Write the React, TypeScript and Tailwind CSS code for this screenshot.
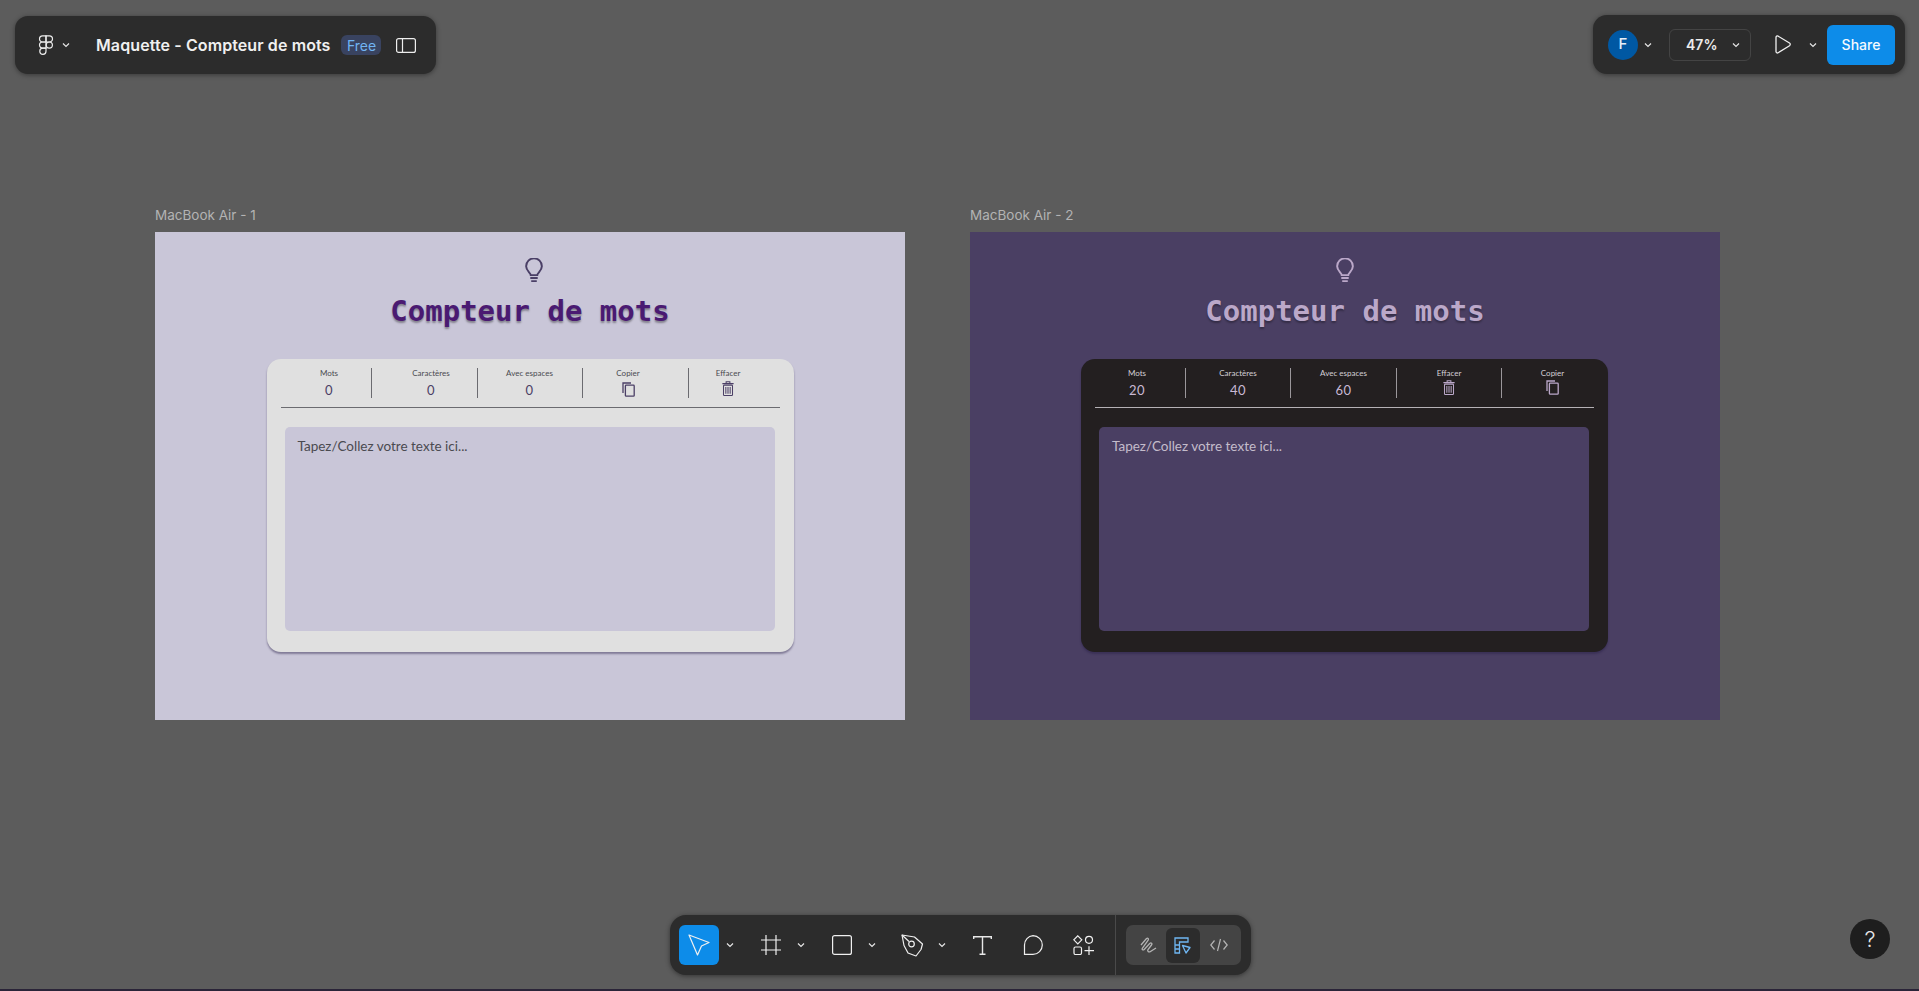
import { type ReactNode } from 'react';

const ui = 'font-["Inter",sans-serif]';

function Chevron({ className = 'text-[#e6e6e6]' }: { className?: string }) {
  return (
    <svg width="8" height="6" viewBox="0 0 8 6" fill="none" className={className}>
      <path d="M1 1.5 4 4.5 7 1.5" stroke="currentColor" strokeWidth="1.2" />
    </svg>
  );
}

function FigmaLogo() {
  return (
    <svg width="16" height="21" viewBox="0 0 16 21" fill="none" stroke="#ececec" strokeWidth="1.2">
      <path d="M8 .8H4.6a3.1 3.1 0 0 0 0 6.2H8z" />
      <path d="M8 .8h3.4a3.1 3.1 0 0 1 0 6.2H8z" />
      <path d="M8 7H4.6a3.1 3.1 0 0 0 0 6.2H8z" />
      <circle cx="11.3" cy="10.1" r="3.1" />
      <path d="M8 13.2H4.6a3.1 3.1 0 1 0 3.4 3.1z" />
    </svg>
  );
}

function Bulb({ className }: { className: string }) {
  return (
    <svg width="18" height="25" viewBox="0 0 19 27" fill="none" className={className} stroke="currentColor" strokeWidth="2.1">
      <path d="M6 18.5c0-2.4-5-4.6-5-9.6a8.5 8.5 0 0 1 17 0c0 5-5 7.2-5 9.6z" />
      <path d="M5.5 21.5h8M6.5 25h6" />
    </svg>
  );
}

function CopyIcon({ className }: { className: string }) {
  return (
    <svg width="13" height="15" viewBox="0 0 13 15" fill="none" className={className} stroke="currentColor" strokeWidth="1.3">
      <path d="M1 11V1h8" />
      <rect x="3.4" y="3.2" width="8.8" height="11" rx=".8" />
    </svg>
  );
}

function TrashIcon({ className }: { className: string }) {
  return (
    <svg width="12" height="15" viewBox="0 0 12 16" fill="none" className={className} stroke="currentColor" strokeWidth="1.1">
      <path d="M0 2.8h12M4 2.6V.8h4v1.8" />
      <rect x="1.2" y="4.4" width="9.6" height="11" rx=".8" />
      <path d="M3.7 6.5v7M6 6.5v7M8.3 6.5v7" />
    </svg>
  );
}

interface Stat {
  label: string;
  value?: string;
  icon?: 'copy' | 'trash';
  col: string;
}

const lightStats: Stat[] = [
  { label: 'Mots', value: '0', col: 'w-[91px] pl-[7px]' },
  { label: 'Caractères', value: '0', col: 'w-[106px] pl-[14px]' },
  { label: 'Avec espaces', value: '0', col: 'w-[105px]' },
  { label: 'Copier', icon: 'copy', col: 'w-[106px] pr-[14px]' },
  { label: 'Effacer', icon: 'trash', col: 'w-[90px] pr-[11px]' },
];

const darkStats: Stat[] = [
  { label: 'Mots', value: '20', col: 'w-[91px] pr-[6px]' },
  { label: 'Caractères', value: '40', col: 'w-[105px]' },
  { label: 'Avec espaces', value: '60', col: 'w-[106px]' },
  { label: 'Effacer', icon: 'trash', col: 'w-[105px]' },
  { label: 'Copier', icon: 'copy', col: 'w-[91px] pl-[10px]' },
];

function StatColumn({ stat, dark, last }: { stat: Stat; dark: boolean; last: boolean }) {
  const iconColor = dark ? 'text-[#bba8c9]' : 'text-[#4b3f66]';
  return (
    <div
      className={`flex h-[30px] flex-col items-center ${stat.col} ${
        last ? '' : dark ? 'border-r border-[#9b979b]' : 'border-r border-[#6b6b70]'
      }`}
    >
      <span className={`text-[8px] leading-[11px] ${dark ? 'text-[#d4d0d6]' : 'text-[#4a4a50]'}`}>{stat.label}</span>
      {stat.value ? (
        <span className={`mt-[4px] text-[13px] leading-[15px] tracking-[0.5px] ${dark ? 'text-[#c9b9d4]' : 'text-[#4b3f66]'}`}>
          {stat.value}
        </span>
      ) : stat.icon === 'copy' ? (
        <CopyIcon className={`${iconColor} ${dark ? 'mt-[1px]' : 'mt-[3px]'}`} />
      ) : (
        <TrashIcon className={`${iconColor} ${dark ? 'mt-[1px]' : 'mt-[2px]'}`} />
      )}
    </div>
  );
}

function Frame({ name, dark, left, stats }: { name: string; dark: boolean; left: string; stats: Stat[] }) {
  return (
    <div className={`absolute top-[205px] w-[750px] ${left}`}>
      <div className={`${ui} h-[27px] pt-[1px] text-[13.5px] leading-[18px] text-[#b3b3b3]`}>{name}</div>
      <div className={`flex h-[488px] flex-col items-center pt-[26px] font-["Lato",sans-serif] ${dark ? 'bg-[#4a3f63]' : 'bg-[#c9c6d8]'}`}>
        <Bulb className={dark ? 'text-[#bba8c9]' : 'ml-[7px] text-[#4a3f66]'} />
        <h1
          className={`mt-[10px] h-[37px] font-["DejaVu_Sans_Mono",monospace] text-[29px] font-bold leading-[37px] ${
            dark
              ? 'text-[#bba8c9] [text-shadow:0_2px_2px_rgba(0,0,0,0.3)]'
              : 'text-[#4a1a72] [text-shadow:0_2px_2px_rgba(0,0,0,0.35)]'
          }`}
        >
          Compteur de mots
        </h1>
        <section
          className={`mt-[29px] h-[293px] w-[527px] rounded-[14px] px-[14px] pt-[9px] shadow-[0_2px_2px_rgba(40,30,70,0.45)] ${
            dark ? '-ml-[1px] bg-[#231f20]' : 'bg-[#e0e0e0]'
          }`}
        >
          <div className={`flex h-[40px] border-b ${dark ? 'border-[#b5b1b5]' : 'border-[#6b6b70]'}`}>
            {stats.map((stat, i) => (
              <StatColumn key={stat.label} stat={stat} dark={dark} last={i === stats.length - 1} />
            ))}
          </div>
          <div
            className={`ml-[4px] mr-[5px] mt-[19px] h-[204px] rounded-[5px] px-[13px] py-[11px] text-[13.5px] leading-[17px] ${
              dark ? 'bg-[#4a3f63] text-[#c4bccb]' : 'bg-[#c9c6d8] text-[#4a4a50]'
            }`}
          >
            Tapez/Collez votre texte ici...
          </div>
        </section>
      </div>
    </div>
  );
}

function Tool({ children, chevron }: { children: ReactNode; chevron?: boolean }) {
  return (
    <div className="flex h-[40px] items-center">
      <div className="flex h-[40px] w-[40px] items-center justify-center">{children}</div>
      {chevron && (
        <div className="flex w-[20px] justify-center">
          <Chevron />
        </div>
      )}
    </div>
  );
}

function Toolbar() {
  const stroke = { fill: 'none', stroke: '#f0f0f0', strokeWidth: 1.2 };
  return (
    <div className="absolute bottom-[16px] left-[670px] flex h-[60px] w-[581px] items-center rounded-[16px] bg-[#2c2c2c] pl-[9px] shadow-[0_1px_5px_rgba(0,0,0,0.45)]">
      <div className="flex h-[40px] w-[40px] items-center justify-center rounded-[6px] bg-[#0d8ce9]">
        <svg width="22" height="22" viewBox="0 0 22 22" {...stroke}>
          <path d="M1 1 21 8.500 13.500 12 9.500 21z" strokeLinejoin="round" />
        </svg>
      </div>
      <div className="mr-[10px] flex w-[22px] justify-center">
        <Chevron />
      </div>
      <div className="flex items-center gap-[10.6px]">
        <Tool chevron>
          <svg width="20" height="20" viewBox="0 0 20 20" {...stroke}>
            <path d="M0 5h20M0 15h20M5 0v20M15 0v20" />
          </svg>
        </Tool>
        <Tool chevron>
          <svg width="20" height="20" viewBox="0 0 20 20" {...stroke}>
            <rect x=".6" y=".6" width="18.800" height="18.800" rx="2" />
          </svg>
        </Tool>
        <Tool chevron>
          <svg width="23" height="23" viewBox="0 0 23 23" {...stroke}>
            <path d="M1 1 13.500 3 21.500 10 20 15.500 15 22 7 19 3 11.500z" strokeLinejoin="round" />
            <path d="M1 1 8 7.500" />
            <circle cx="10.500" cy="10" r="2.800" />
          </svg>
        </Tool>
        <Tool>
          <svg width="19" height="19" viewBox="0 0 19 19" fill="none" stroke="#e8e8e8" strokeWidth="1.4">
            <path d="M.7 3V.7h17.600V3M9.500 .7v17.600M6.500 18.300h6" />
          </svg>
        </Tool>
        <Tool>
          <svg width="20" height="20" viewBox="0 0 20 20" {...stroke}>
            <path d="M10 .7a9.300 9.300 0 0 1 0 18.600H1.500V10A9.300 9.300 0 0 1 10 .7z" />
          </svg>
        </Tool>
        <Tool>
          <svg width="21" height="20" viewBox="0 0 21 20" {...stroke}>
            <path d="M4.800 .8 8.800 4.800 4.800 8.800 .8 4.800z" />
            <circle cx="16" cy="4.800" r="3.500" />
            <rect x="1" y="12" width="7.500" height="7.500" rx="1.500" />
            <path d="M11.500 15.700H21M16 11.200v8.800" />
          </svg>
        </Tool>
      </div>
      <div className="ml-[11px] h-[60px] w-[1px] bg-[#4a4a4a]" />
      <div className="ml-[10px] flex h-[40px] w-[115px] items-center rounded-[7px] bg-[#444444] pl-[6px]">
        <div className="flex w-[34px] justify-center">
          <svg width="17" height="17" viewBox="0 0 17 17" fill="none" stroke="#b4b4b4" strokeWidth="1.300">
            <path d="M1 8 6.500 1.500C8 .5 9 2 8 3.500L2.500 11c-1 1.500.500 2.500 1.700 1.500l5.500-6c1.500-1.300 2.800 0 1.800 1.500L8 12.500c-1 2 1 3 2.500 2L16 11" />
          </svg>
        </div>
        <div className="flex h-[35px] w-[34px] items-center justify-center rounded-[6px] bg-[#2c2c2c]">
          <svg width="17" height="17" viewBox="0 0 17 17" fill="none" stroke="#6fb6f2" strokeWidth="1.300">
            <path d="M1 1h13v4H5.500v11H1zM1 8h4.500M1 12h4.500" />
            <path d="M8.500 8.500 16 10.500 12 16z" strokeLinejoin="round" />
          </svg>
        </div>
        <div className="flex w-[38px] justify-center">
          <svg width="18" height="14" viewBox="0 0 18 14" fill="none" stroke="#b4b4b4" strokeWidth="1.200">
            <path d="M4.500 2.500 .8 7l3.700 4.500M13.500 2.500 17.200 7l-3.700 4.500M10.500 1 7.500 13" />
          </svg>
        </div>
      </div>
    </div>
  );
}

export default function App() {
  return (
    <div className={`relative h-[991px] w-[1919px] overflow-hidden bg-[#5c5c5c] ${ui}`}>
      <Frame name="MacBook Air - 1" dark={false} left="left-[155px]" stats={lightStats} />
      <Frame name="MacBook Air - 2" dark left="left-[970px]" stats={darkStats} />

      {/* left title bar */}
      <header className="absolute left-[15px] top-[16px] flex h-[58px] w-[421px] items-center rounded-[13px] bg-[#2c2c2c] pl-[23px] shadow-[0_1px_5px_rgba(0,0,0,0.4)]">
        <FigmaLogo />
        <span className="ml-[8px]">
          <Chevron />
        </span>
        <span className="ml-[26px] text-[16px] font-semibold leading-[20px] tracking-[0.1px] text-[#f0f0f0]">Maquette - Compteur de mots</span>
        <span className="ml-[11px] flex h-[20px] w-[40px] items-center justify-center rounded-[6px] bg-[#394360] text-[14px] text-[#71b4f3]">
          Free
        </span>
        <svg width="20" height="15" viewBox="0 0 20 15" fill="none" stroke="#eeeeee" strokeWidth="1.200" className="ml-[15px]">
          <rect x=".6" y=".6" width="18.800" height="13.800" rx="2" />
          <path d="M6.500 .6v13.800" />
        </svg>
      </header>

      {/* right share bar */}
      <div className="absolute left-[1593px] top-[15px] flex h-[59px] w-[312px] items-center rounded-[14px] bg-[#2c2c2c] pl-[15px] shadow-[0_1px_5px_rgba(0,0,0,0.4)]">
        <div className="flex h-[30px] w-[30px] items-center justify-center rounded-full bg-[#0058a3] text-[15px] font-medium text-[#e8f0f8]">F</div>
        <span className="ml-[6px]">
          <Chevron />
        </span>
        <div className="ml-[17px] flex h-[32px] w-[82px] items-center rounded-[6px] border border-[#444444] pl-[16px] text-[14px] font-semibold text-[#ececec]">
          47%
          <span className="ml-[15px]">
            <Chevron />
          </span>
        </div>
        <svg width="16" height="19" viewBox="0 0 16 19" fill="none" stroke="#f0f0f0" strokeWidth="1.300" className="ml-[24px]">
          <path d="M1 2.500c0-1.300 1-1.900 2.200-1.300L14.500 8c1 .6 1 2 0 2.700L3.200 17.700C2 18.400 1 17.700 1 16.500z" />
        </svg>
        <span className="ml-[18px]">
          <Chevron />
        </span>
        <button className="ml-[10px] h-[40px] w-[68px] rounded-[6px] bg-[#0d8ce9] text-[14px] font-medium text-[#f4faff]">Share</button>
      </div>

      <Toolbar />

      <button className="absolute left-[1850px] top-[919px] flex h-[40px] w-[40px] items-center justify-center rounded-full bg-[#1e1e1e] text-[22px] font-light text-[#e6e6e6]">
        ?
      </button>

      <div className="absolute bottom-0 left-0 h-[2px] w-full bg-[#2a2438]" />
    </div>
  );
}
